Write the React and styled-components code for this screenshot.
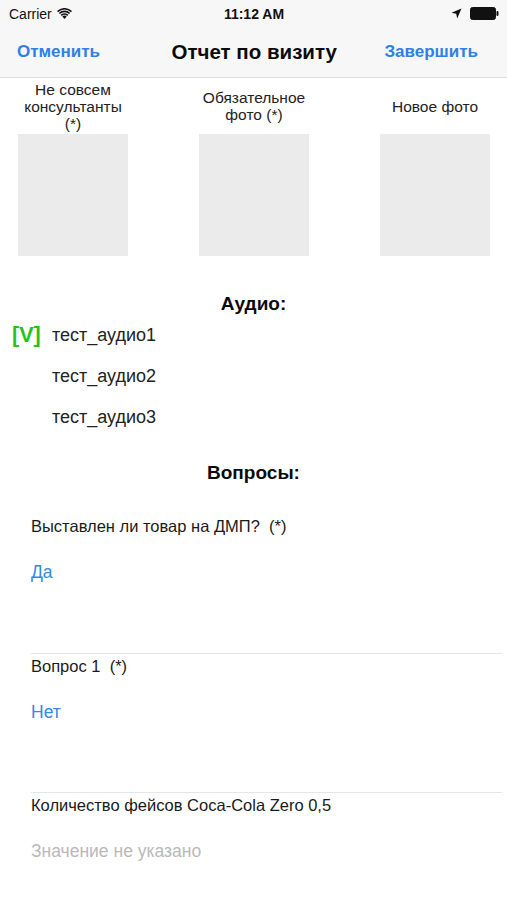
import React from "react";
import styled, { createGlobalStyle } from "styled-components";

const Global = createGlobalStyle`
  html, body { margin: 0; padding: 0; background: #fff; }
  body { font-family: "Liberation Sans", Arial, sans-serif; color: #111; }
  * { box-sizing: border-box; }
`;

const Screen = styled.div`
  width: 507px;
  height: 900px;
  background: #fff;
  overflow: hidden;
`;

const Header = styled.header`
  background: #f7f7f7;
  border-bottom: 1px solid #dcdcdc;
`;

const StatusBar = styled.div`
  height: 27px;
  display: grid;
  grid-template-columns: 1fr auto 1fr;
  align-items: center;
  padding: 0 8px 0 9px;
  font-size: 14px;
`;

const Carrier = styled.div`
  display: flex;
  align-items: center;
  gap: 5px;
  color: #111;
`;

const Time = styled.div`
  font-weight: 700;
  font-size: 14px;
`;

const RightIcons = styled.div`
  display: flex;
  justify-content: flex-end;
  align-items: center;
  gap: 8px;
`;

const NavBar = styled.div`
  height: 50px;
  display: flex;
  align-items: center;
  justify-content: space-between;
  padding: 0 29px 0 17px;
`;

const NavButton = styled.button`
  border: 0;
  background: none;
  padding: 0;
  font-family: inherit;
  font-size: 17px;
  font-weight: 700;
  color: #2f80e4;
`;

const Title = styled.h1`
  margin: 0 0 0 24px;
  font-size: 20.5px;
  font-weight: 700;
  color: #0b0b0b;
`;

const PhotoRow = styled.div`
  display: flex;
  justify-content: space-between;
  padding: 0 17px 0 18px;
`;

const PhotoCol = styled.div`
  width: 110px;
  display: flex;
  flex-direction: column;
  align-items: center;
`;

const PhotoLabel = styled.div`
  height: 56px;
  width: 150px;
  display: flex;
  align-items: center;
  justify-content: center;
  text-align: center;
  font-size: 15.5px;
  line-height: 17px;
  color: #222;
`;

const PhotoBox = styled.div`
  width: 110px;
  height: 122px;
  background: #ebebeb;
`;

const SectionTitle = styled.h2`
  margin: 0;
  text-align: center;
  font-size: 19px;
  line-height: 22px;
  font-weight: 700;
  color: #0b0b0b;
  padding-top: ${(p) => p.$top}px;
  padding-bottom: ${(p) => p.$bottom}px;
`;

const AudioList = styled.div`
  display: flex;
  flex-direction: column;
`;

const AudioRow = styled.div`
  height: 41px;
  display: flex;
  align-items: center;
  padding-left: 12px;
  font-size: 18px;
  color: #222;
`;

const Check = styled.span`
  width: 40px;
  font-weight: 700;
  color: #22c41f;
  font-size: 21.5px;
`;

const Questions = styled.div`
  padding-left: 31px;
  padding-right: 5px;
`;

const Question = styled.div`
  height: 139px;
  border-top: ${(p) => (p.$first ? "0" : "1px solid #e6e6e6")};
`;

const QLabel = styled.div`
  height: 24px;
  display: flex;
  align-items: center;
  font-size: 16.5px;
  color: #1a1a1a;
  white-space: pre;
`;

const QValue = styled.div`
  margin-top: 22px;
  height: 24px;
  display: flex;
  align-items: center;
  font-size: 17.5px;
  color: ${(p) => (p.$empty ? "#b9b9b9" : "#3588e6")};
`;

const Wifi = () => (
  <svg width="15" height="11" viewBox="0 0 15 11">
    <path d="M7.5 11 L5.3 8.6 A3.2 3.2 0 0 1 9.7 8.6 Z" fill="#111" />
    <path d="M3.6 6.8 A5.6 5.6 0 0 1 11.4 6.8 L10.3 8 A4 4 0 0 0 4.7 8 Z" fill="#111" />
    <path d="M1.8 4.9 A8.2 8.2 0 0 1 13.2 4.9 L12.1 6.1 A6.6 6.6 0 0 0 2.9 6.1 Z" fill="#111" />
    <path d="M0 3 A10.8 10.8 0 0 1 15 3 L13.9 4.2 A9.2 9.2 0 0 0 1.1 4.2 Z" fill="#111" />
  </svg>
);

const LocationArrow = () => (
  <svg width="11" height="11" viewBox="0 0 11 11">
    <path d="M10.5 0.5 L0.5 4.8 L5.2 5.8 L6.2 10.5 Z" fill="#111" />
  </svg>
);

const Battery = () => (
  <svg width="29" height="13" viewBox="0 0 29 13">
    <rect x="0.5" y="0.5" width="25" height="12" rx="2" fill="#111" stroke="#111" />
    <rect x="26.5" y="4" width="2" height="5" rx="1" fill="#111" />
  </svg>
);

const photos = [
  { label: "Не совсем\nконсультанты\n(*)" },
  { label: "Обязательное\nфото (*)" },
  { label: "Новое фото" },
];

const audios = [
  { name: "тест_аудио1", checked: true },
  { name: "тест_аудио2", checked: false },
  { name: "тест_аудио3", checked: false },
];

const questions = [
  { label: "Выставлен ли товар на ДМП?  (*)", value: "Да" },
  { label: "Вопрос 1  (*)", value: "Нет" },
  { label: "Количество фейсов Coca-Cola Zero 0,5", value: "Значение не указано", empty: true },
];

export default function App() {
  return (
    <Screen>
      <Global />
      <Header>
        <StatusBar>
          <Carrier>
            Carrier <Wifi />
          </Carrier>
          <Time>11:12 AM</Time>
          <RightIcons>
            <LocationArrow />
            <Battery />
          </RightIcons>
        </StatusBar>
        <NavBar>
          <NavButton>Отменить</NavButton>
          <Title>Отчет по визиту</Title>
          <NavButton>Завершить</NavButton>
        </NavBar>
      </Header>

      <PhotoRow>
        {photos.map((p, i) => (
          <PhotoCol key={i}>
            <PhotoLabel>
              <span>
                {p.label.split("\n").map((l, j) => (
                  <React.Fragment key={j}>
                    {j > 0 && <br />}
                    {l}
                  </React.Fragment>
                ))}
              </span>
            </PhotoLabel>
            <PhotoBox />
          </PhotoCol>
        ))}
      </PhotoRow>

      <SectionTitle $top={37} $bottom={0}>Аудио:</SectionTitle>
      <AudioList>
        {audios.map((a) => (
          <AudioRow key={a.name}>
            <Check>{a.checked ? "[V]" : ""}</Check>
            {a.name}
          </AudioRow>
        ))}
      </AudioList>

      <SectionTitle $top={24} $bottom={30}>Вопросы:</SectionTitle>
      <Questions>
        {questions.map((q, i) => (
          <Question key={i} $first={i === 0}>
            <QLabel>{q.label}</QLabel>
            <QValue $empty={q.empty}>{q.value}</QValue>
          </Question>
        ))}
      </Questions>
    </Screen>
  );
}
